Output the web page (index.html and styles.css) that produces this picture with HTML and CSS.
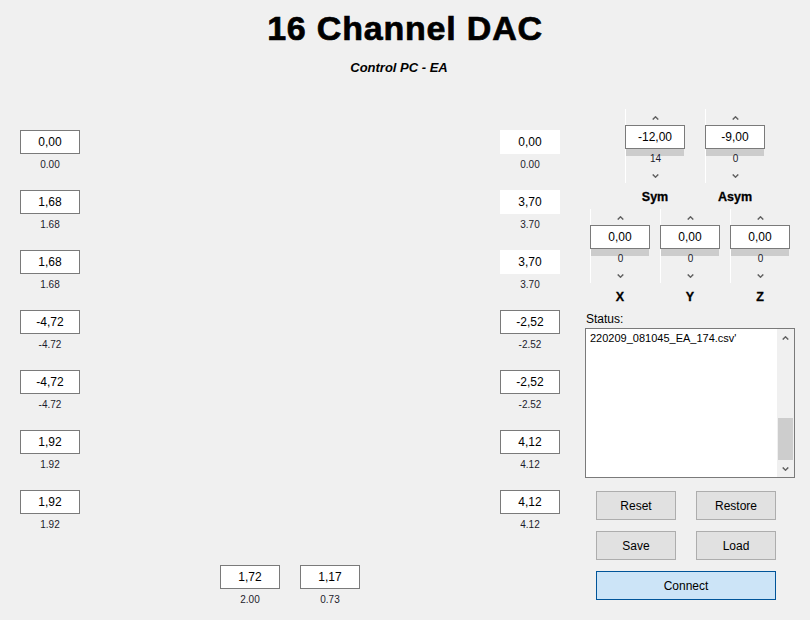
FILE: index.html
```html
<!DOCTYPE html>
<html>
<head>
<meta charset="utf-8">
<link rel="stylesheet" href="styles.css">
</head>
<body>
<div class="app">
  <header class="head">
    <h1 class="title">16 Channel DAC</h1>
    <p class="subtitle">Control PC - EA</p>
  </header>
  <main class="main">
    <div class="chan-col">
      <div class="chan"><div class="val">0,00</div><div class="lbl">0.00</div></div>
      <div class="chan"><div class="val">1,68</div><div class="lbl">1.68</div></div>
      <div class="chan"><div class="val">1,68</div><div class="lbl">1.68</div></div>
      <div class="chan"><div class="val">-4,72</div><div class="lbl">-4.72</div></div>
      <div class="chan"><div class="val">-4,72</div><div class="lbl">-4.72</div></div>
      <div class="chan"><div class="val">1,92</div><div class="lbl">1.92</div></div>
      <div class="chan"><div class="val">1,92</div><div class="lbl">1.92</div></div>
    </div>
    <div class="mid">
      <div class="chan"><div class="val">1,72</div><div class="lbl">2.00</div></div>
      <div class="chan"><div class="val">1,17</div><div class="lbl">0.73</div></div>
    </div>
    <div class="chan-col">
      <div class="chan"><div class="val plain">0,00</div><div class="lbl">0.00</div></div>
      <div class="chan"><div class="val plain">3,70</div><div class="lbl">3.70</div></div>
      <div class="chan"><div class="val plain">3,70</div><div class="lbl">3.70</div></div>
      <div class="chan"><div class="val">-2,52</div><div class="lbl">-2.52</div></div>
      <div class="chan"><div class="val">-2,52</div><div class="lbl">-2.52</div></div>
      <div class="chan"><div class="val">4,12</div><div class="lbl">4.12</div></div>
      <div class="chan"><div class="val">4,12</div><div class="lbl">4.12</div></div>
    </div>
    <aside class="panel">
      <div class="spin-row sym-row">
        <div class="spin-group">
          <div class="spin">
            <svg class="arrow" width="7" height="4" viewBox="0 0 7 4"><polyline points="0.7,3.6 3.5,0.8 6.3,3.6" fill="none" stroke="#606060" stroke-width="1.4"/></svg>
            <div class="val">-12,00</div>
            <div class="bar"></div>
            <div class="num">14</div>
            <svg class="arrow down" width="7" height="4" viewBox="0 0 7 4"><polyline points="0.7,0.4 3.5,3.2 6.3,0.4" fill="none" stroke="#606060" stroke-width="1.4"/></svg>
          </div>
          <div class="axis">Sym</div>
        </div>
        <div class="spin-group">
          <div class="spin">
            <svg class="arrow" width="7" height="4" viewBox="0 0 7 4"><polyline points="0.7,3.6 3.5,0.8 6.3,3.6" fill="none" stroke="#606060" stroke-width="1.4"/></svg>
            <div class="val">-9,00</div>
            <div class="bar"></div>
            <div class="num">0</div>
            <svg class="arrow down" width="7" height="4" viewBox="0 0 7 4"><polyline points="0.7,0.4 3.5,3.2 6.3,0.4" fill="none" stroke="#606060" stroke-width="1.4"/></svg>
          </div>
          <div class="axis">Asym</div>
        </div>
      </div>
      <div class="spin-row xyz-row">
        <div class="spin-group">
          <div class="spin">
            <svg class="arrow" width="7" height="4" viewBox="0 0 7 4"><polyline points="0.7,3.6 3.5,0.8 6.3,3.6" fill="none" stroke="#606060" stroke-width="1.4"/></svg>
            <div class="val">0,00</div>
            <div class="bar"></div>
            <div class="num">0</div>
            <svg class="arrow down" width="7" height="4" viewBox="0 0 7 4"><polyline points="0.7,0.4 3.5,3.2 6.3,0.4" fill="none" stroke="#606060" stroke-width="1.4"/></svg>
          </div>
          <div class="axis">X</div>
        </div>
        <div class="spin-group">
          <div class="spin">
            <svg class="arrow" width="7" height="4" viewBox="0 0 7 4"><polyline points="0.7,3.6 3.5,0.8 6.3,3.6" fill="none" stroke="#606060" stroke-width="1.4"/></svg>
            <div class="val">0,00</div>
            <div class="bar"></div>
            <div class="num">0</div>
            <svg class="arrow down" width="7" height="4" viewBox="0 0 7 4"><polyline points="0.7,0.4 3.5,3.2 6.3,0.4" fill="none" stroke="#606060" stroke-width="1.4"/></svg>
          </div>
          <div class="axis">Y</div>
        </div>
        <div class="spin-group">
          <div class="spin">
            <svg class="arrow" width="7" height="4" viewBox="0 0 7 4"><polyline points="0.7,3.6 3.5,0.8 6.3,3.6" fill="none" stroke="#606060" stroke-width="1.4"/></svg>
            <div class="val">0,00</div>
            <div class="bar"></div>
            <div class="num">0</div>
            <svg class="arrow down" width="7" height="4" viewBox="0 0 7 4"><polyline points="0.7,0.4 3.5,3.2 6.3,0.4" fill="none" stroke="#606060" stroke-width="1.4"/></svg>
          </div>
          <div class="axis">Z</div>
        </div>
      </div>
      <div class="status-label">Status:</div>
      <div class="status">
        <div class="status-text">220209_081045_EA_174.csv'</div>
        <div class="scrollbar">
          <div class="sb-btn"><svg width="7" height="4" viewBox="0 0 7 4"><polyline points="0.7,3.6 3.5,0.8 6.3,3.6" fill="none" stroke="#606060" stroke-width="1.4"/></svg></div>
          <div class="sb-track"><div class="sb-thumb"></div></div>
          <div class="sb-btn"><svg width="7" height="4" viewBox="0 0 7 4"><polyline points="0.7,0.4 3.5,3.2 6.3,0.4" fill="none" stroke="#606060" stroke-width="1.4"/></svg></div>
        </div>
      </div>
      <div class="buttons">
        <button class="btn">Reset</button>
        <button class="btn">Restore</button>
        <button class="btn">Save</button>
        <button class="btn">Load</button>
        <button class="btn connect">Connect</button>
      </div>
    </aside>
  </main>
</div>
</body>
</html>
```
FILE: styles.css
```css
* { box-sizing: border-box; }
html, body {
  margin: 0;
  padding: 0;
  background: #f0f0f0;
}
body {
  font-family: "Liberation Sans", Arial, sans-serif;
  color: #000;
  width: 810px;
  height: 620px;
  overflow: hidden;
}
.head {
  padding-top: 8px;
  text-align: center;
}
.title {
  margin: 0;
  font-size: 34px;
  line-height: 40px;
  font-weight: bold;
  letter-spacing: 0.8px;
  -webkit-text-stroke: 0.7px #000;
}
.subtitle {
  margin: 12px 0 0;
  padding-right: 12px;
  font-size: 13px;
  line-height: 16px;
  font-weight: bold;
  font-style: italic;
}
.main {
  margin-top: 32px;
  display: flex;
  padding-left: 20px;
}
.chan-col {
  width: 60px;
  padding-top: 22px;
  display: flex;
  flex-direction: column;
  gap: 18px;
}
.chan {
  width: 60px;
}
.val {
  height: 24px;
  background: #fff;
  border: 1px solid #7a7a7a;
  font-size: 12px;
  line-height: 22px;
  text-align: center;
}
.val.plain {
  border-color: #fff;
}
.lbl {
  margin-top: 4px;
  font-size: 10px;
  line-height: 14px;
  text-align: center;
  color: #1c1c2c;
}
.mid {
  width: 420px;
  padding-top: 457px;
  padding-left: 140px;
  display: flex;
  gap: 20px;
}
.panel {
  width: 210px;
  margin-left: 25px;
  padding-top: 1px;
  display: flex;
  flex-direction: column;
}
.spin-row {
  display: flex;
}
.sym-row {
  padding-left: 40px;
  gap: 20px;
}
.xyz-row {
  margin-top: 5px;
  padding-left: 5px;
  gap: 10px;
}
.spin-group {
  width: 60px;
}
.spin {
  height: 74px;
  border-left: 1px solid #fff;
  display: flex;
  flex-direction: column;
}
.arrow {
  display: block;
  margin: 7px auto 0;
}
.arrow.down {
  margin-top: 9px;
}
.spin .val {
  margin-top: 5px;
  margin-left: -1px;
  width: 60px;
}
.bar {
  height: 7px;
  width: 58px;
  background: #cccccc;
}
.num {
  margin-top: -3px;
  font-size: 10px;
  line-height: 12px;
  text-align: center;
  color: #1c1c2c;
}
.axis {
  margin-top: 7px;
  font-size: 12.5px;
  line-height: 14px;
  font-weight: bold;
  text-align: center;
  -webkit-text-stroke: 0.3px #000;
}
.status-label {
  margin-top: 8px;
  font-size: 12px;
  line-height: 14px;
  padding-left: 1px;
}
.status {
  margin-top: 2px;
  height: 150px;
  border: 1px solid #7a7a7a;
  background: #fff;
  display: flex;
}
.status-text {
  flex: 1;
  padding: 2px 0 0 4px;
  font-size: 11px;
  line-height: 14px;
}
.scrollbar {
  width: 17px;
  background: #f0f0f0;
  display: flex;
  flex-direction: column;
}
.sb-btn {
  height: 17px;
  display: flex;
  align-items: center;
  justify-content: center;
}
.sb-track {
  flex: 1;
  display: flex;
  flex-direction: column;
  justify-content: flex-end;
}
.sb-thumb {
  height: 42px;
  margin: 0 1px;
  background: #cdcdcd;
}
.buttons {
  margin-top: 13px;
  margin-left: 11px;
  display: grid;
  grid-template-columns: 80px 80px;
  column-gap: 20px;
  row-gap: 11px;
}
.btn {
  height: 29px;
  padding: 0;
  background: #e1e1e1;
  border: 1px solid #adadad;
  font-family: "Liberation Sans", Arial, sans-serif;
  font-size: 12px;
  color: #000;
}
.btn.connect {
  grid-column: 1 / 3;
  background: #cce4f7;
  border-color: #005499;
}
```
